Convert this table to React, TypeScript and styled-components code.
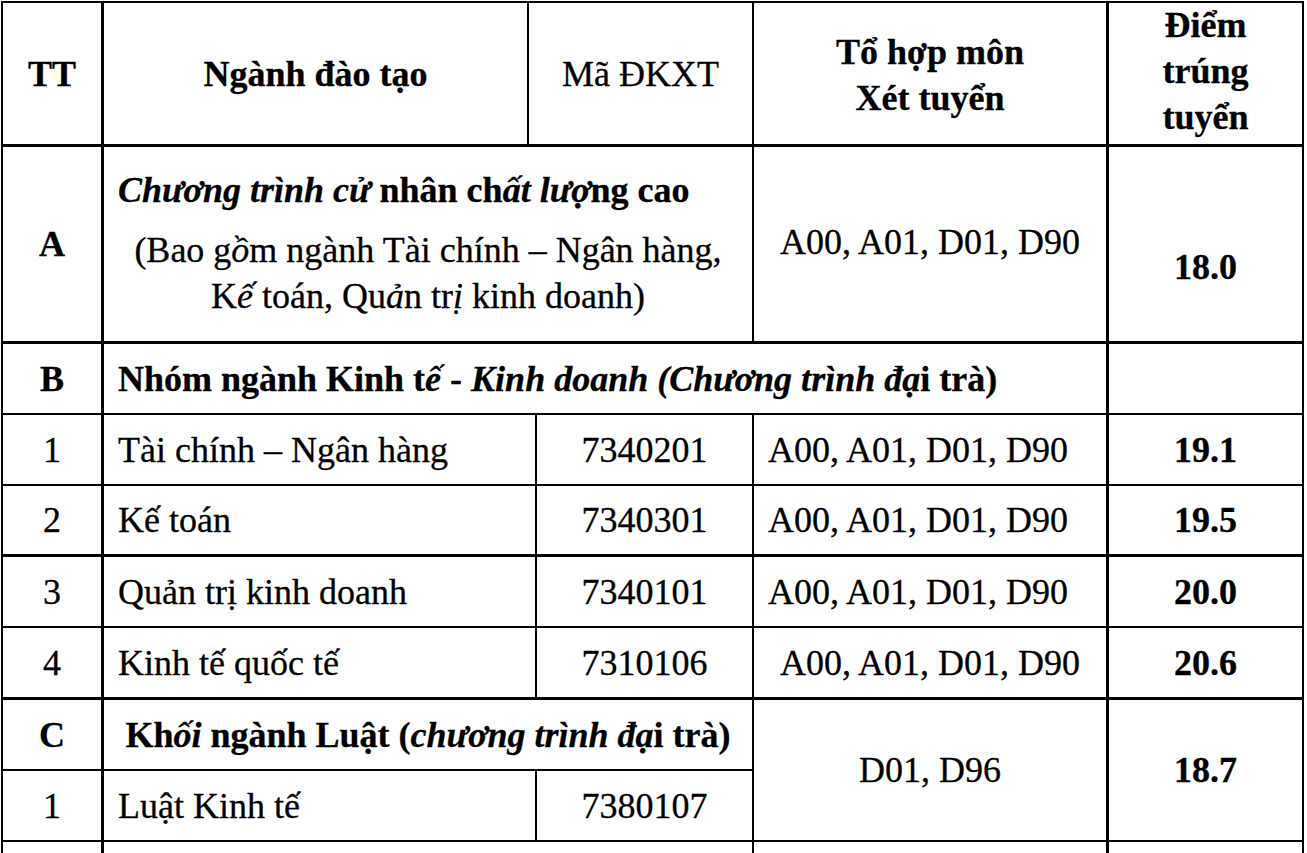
import React from "react";
import styled, { createGlobalStyle } from "styled-components";

const GlobalStyle = createGlobalStyle`
  html, body {
    margin: 0;
    padding: 0;
    background: #ffffff;
    overflow: hidden;
  }
  body {
    font-family: "Liberation Serif", "Times New Roman", serif;
    color: #000000;
  }
`;

const Table = styled.div`
  display: grid;
  grid-template-columns: 101px 425px 8px 217px 355px 195px;
  grid-template-rows: 144px 197px 71px 71px 71px 71px 72px 71px 71px 80px;
  width: max-content;
  margin: 1px 0 0 1px;
  border-top: 2px solid #000;
  border-left: 2px solid #000;
  font-family: "Liberation Serif", "Times New Roman", serif;
  font-size: 36px;
  line-height: 46px;
  -webkit-text-stroke: 0.3px #000;
`;

type CellProps = {
  $c: string;
  $r: string;
  $rw?: number;
  $bw?: number;
  $align?: "left" | "center";
  $bold?: boolean;
  $pt?: number;
  $pb?: number;
};

const Cell = styled.div<CellProps>`
  box-sizing: border-box;
  grid-column: ${(p) => p.$c};
  grid-row: ${(p) => p.$r};
  border-right: ${(p) => p.$rw ?? 2}px solid #000;
  border-bottom: ${(p) => p.$bw ?? 2}px solid #000;
  display: flex;
  flex-direction: column;
  justify-content: center;
  align-items: ${(p) => (p.$align === "left" ? "flex-start" : "center")};
  text-align: ${(p) => (p.$align === "left" ? "left" : "center")};
  padding: ${(p) => p.$pt ?? 0}px 0 ${(p) => p.$pb ?? 0}px
    ${(p) => (p.$align === "left" ? 14 : 0)}px;
  font-weight: ${(p) => (p.$bold ? 700 : 400)};
  white-space: nowrap;
`;

const IntroCell = styled.div`
  box-sizing: border-box;
  grid-column: 2 / 5;
  grid-row: 2;
  border-right: 2px solid #000;
  border-bottom: 3px solid #000;
  display: flex;
  flex-direction: column;
  padding-top: 20px;
  white-space: nowrap;
`;

const IntroTitle = styled.div`
  font-weight: 700;
  padding-left: 14px;
`;

const IntroNote = styled.div<{ $gap?: number }>`
  text-align: center;
  margin-top: ${(p) => p.$gap ?? 0}px;
`;

const Slant = styled.span`
  font-style: italic;
`;

type Major = {
  no: string;
  name: React.ReactNode;
  code: string;
  combo: string;
  comboAlign: "left" | "center";
  score: string;
  thick: boolean;
};

const majors: Major[] = [
  {
    no: "1",
    name: "Tài chính – Ngân hàng",
    code: "7340201",
    combo: "A00, A01, D01, D90",
    comboAlign: "left",
    score: "19.1",
    thick: false,
  },
  {
    no: "2",
    name: "Kế toán",
    code: "7340301",
    combo: "A00, A01, D01, D90",
    comboAlign: "left",
    score: "19.5",
    thick: true,
  },
  {
    no: "3",
    name: "Quản trị kinh doanh",
    code: "7340101",
    combo: "A00, A01, D01, D90",
    comboAlign: "left",
    score: "20.0",
    thick: false,
  },
  {
    no: "4",
    name: "Kinh tế quốc tế",
    code: "7310106",
    combo: "A00, A01, D01, D90",
    comboAlign: "center",
    score: "20.6",
    thick: true,
  },
];

export default function App() {
  return (
    <>
      <GlobalStyle />
      <Table>
        {/* Header */}
        <Cell $c="1" $r="1" $rw={3} $bw={3} $bold>
          TT
        </Cell>
        <Cell $c="2" $r="1" $bw={3} $bold>
          Ngành đào tạo
        </Cell>
        <Cell $c="3 / 5" $r="1" $bw={3}>
          Mã ĐKXT
        </Cell>
        <Cell $c="5" $r="1" $rw={3} $bw={3} $bold $pt={2}>
          <div>Tổ hợp môn</div>
          <div>Xét tuyển</div>
        </Cell>
        <Cell $c="6" $r="1" $bw={3} $bold $pb={6}>
          <div>Điểm</div>
          <div>trúng</div>
          <div>tuyển</div>
        </Cell>

        {/* A */}
        <Cell $c="1" $r="2" $rw={3} $bw={3} $bold>
          A
        </Cell>
        <IntroCell>
          <IntroTitle>
            <Slant>Chương trình cử</Slant> nhân ch<Slant>ất</Slant>{" "}
            <Slant>lượ</Slant>ng cao
          </IntroTitle>
          <IntroNote $gap={14}>
            (Bao g<Slant>ồ</Slant>m ngành Tài chính – Ngân hàng,
          </IntroNote>
          <IntroNote>
            K<Slant>ế </Slant>toán, Qu<Slant>ả</Slant>n tr<Slant>ị</Slant> kinh
            doanh)
          </IntroNote>
        </IntroCell>
        <Cell $c="5" $r="2" $rw={3} $bw={3} $pb={4}>
          A00, A01, D01, D90
        </Cell>
        <Cell $c="6" $r="2" $bw={3} $bold $pt={46}>
          18.0
        </Cell>

        {/* B */}
        <Cell $c="1" $r="3" $rw={3} $bold>
          B
        </Cell>
        <Cell $c="2 / 6" $r="3" $rw={3} $align="left" $bold>
          <span>
            Nhóm ngành Kinh t<Slant>ế</Slant> -{" "}
            <Slant>Kinh doanh (Chương trình đạ</Slant>i trà)
          </span>
        </Cell>
        <Cell $c="6" $r="3" />

        {/* Rows 1-4 */}
        {majors.map((m, i) => {
          const r = String(4 + i);
          const bw = m.thick ? 3 : 2;
          return (
            <React.Fragment key={m.code}>
              <Cell $c="1" $r={r} $rw={3} $bw={bw}>
                {m.no}
              </Cell>
              <Cell $c="2 / 4" $r={r} $bw={bw} $align="left">
                {m.name}
              </Cell>
              <Cell $c="4" $r={r} $bw={bw}>
                {m.code}
              </Cell>
              <Cell $c="5" $r={r} $rw={3} $bw={bw} $align={m.comboAlign}>
                {m.combo}
              </Cell>
              <Cell $c="6" $r={r} $bw={bw} $bold>
                {m.score}
              </Cell>
            </React.Fragment>
          );
        })}

        {/* C */}
        <Cell $c="1" $r="8" $rw={3} $bold>
          C
        </Cell>
        <Cell $c="2 / 5" $r="8" $bold>
          <span>
            Kh<Slant>ối</Slant> ngành Luật (
            <Slant>chương trình đạ</Slant>i trà)
          </span>
        </Cell>
        <Cell $c="5" $r="8 / 10" $rw={3}>
          D01, D96
        </Cell>
        <Cell $c="6" $r="8 / 10" $bold>
          18.7
        </Cell>
        <Cell $c="1" $r="9" $rw={3}>
          1
        </Cell>
        <Cell $c="2 / 4" $r="9" $align="left">
          Luật Kinh tế
        </Cell>
        <Cell $c="4" $r="9">
          7380107
        </Cell>

        {/* Next row (cut off) */}
        <Cell $c="1" $r="10" $rw={3} />
        <Cell $c="2 / 5" $r="10" />
        <Cell $c="5" $r="10" $rw={3} />
        <Cell $c="6" $r="10" />
      </Table>
    </>
  );
}
